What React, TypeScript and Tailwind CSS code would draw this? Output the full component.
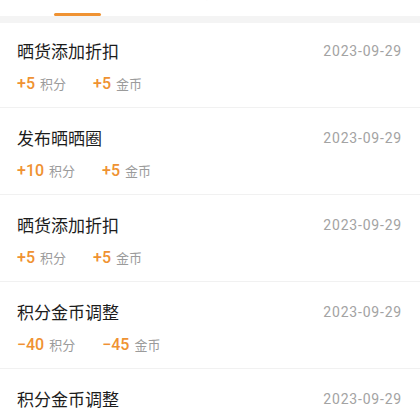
import React from 'react';

type Record = {
  title: string;
  date: string;
  points: string;
  coins: string;
};

const records: Record[] = [
  { title: '晒货添加折扣', date: '2023-09-29', points: '+5', coins: '+5' },
  { title: '发布晒晒圈', date: '2023-09-29', points: '+10', coins: '+5' },
  { title: '晒货添加折扣', date: '2023-09-29', points: '+5', coins: '+5' },
  { title: '积分金币调整', date: '2023-09-29', points: '−40', coins: '−45' },
  { title: '积分金币调整', date: '2023-09-29', points: '−12', coins: '−10' },
];

const cjk = "font-['Noto_Sans_CJK_SC','Noto_Sans',sans-serif]";
const num = "font-['Roboto','Liberation_Sans',sans-serif]";

function Tabs() {
  // 上にスクロールされたタブバー：文字の下端と下線だけが見えている
  const tabs = [
    { label: '全部明细', w: 'w-[154px]', active: true },
    { label: '积分', w: 'w-[102px]', active: false },
    { label: '金币', w: 'w-[164px]', active: false },
  ];
  return (
    <div className="flex h-[16px] items-end overflow-hidden bg-white">
      {tabs.map((t) => (
        <div key={t.label} className={`${t.w} flex flex-col items-center`}>
          <span
            className={`${cjk} text-[15px] leading-[16px] ${
              t.active ? 'text-[#f8e6d2]' : 'text-[#ececec]'
            }`}
          >
            {t.label}
          </span>
          <div
            className={`mt-[13px] h-[3px] w-[47px] rounded-full ${
              t.active ? 'bg-[#ef9232]' : 'bg-transparent'
            }`}
          />
        </div>
      ))}
    </div>
  );
}

function Row({ r, first }: { r: Record; first: boolean }) {
  return (
    <div className={`pl-[17px] ${first ? '' : 'border-t border-[#f1f1f1]'}`}>
      <div className={`pr-[18px] pb-[13px] ${first ? 'pt-[16px]' : 'pt-[18px]'}`}>
        <div className="flex items-center justify-between">
          <span className={`${cjk} text-[17px] leading-[24px] text-[#1c1c1c]`}>{r.title}</span>
          <span className={`${num} text-[14px] leading-[20px] tracking-[0.8px] text-[#a3a3a3]`}>
            {r.date}
          </span>
        </div>
        <div className="mt-[11px] flex items-center">
          <div className="flex items-center gap-[5px]">
            <span className={`${num} text-[16px] leading-[20px] font-medium text-[#ef9232]`}>
              {r.points}
            </span>
            <span className={`${cjk} text-[13px] leading-[20px] text-[#9b9b9b]`}>积分</span>
          </div>
          <div className="ml-[27px] flex items-center gap-[5px]">
            <span className={`${num} text-[16px] leading-[20px] font-medium text-[#ef9232]`}>
              {r.coins}
            </span>
            <span className={`${cjk} text-[13px] leading-[20px] text-[#9b9b9b]`}>金币</span>
          </div>
        </div>
      </div>
    </div>
  );
}

export default function App() {
  return (
    <div className="h-[420px] w-[420px] overflow-hidden bg-white">
      <Tabs />
      <div className="h-[7px] bg-[#f4f4f4]" />
      <div>
        {records.map((r, i) => (
          <Row key={i} r={r} first={i === 0} />
        ))}
      </div>
    </div>
  );
}
